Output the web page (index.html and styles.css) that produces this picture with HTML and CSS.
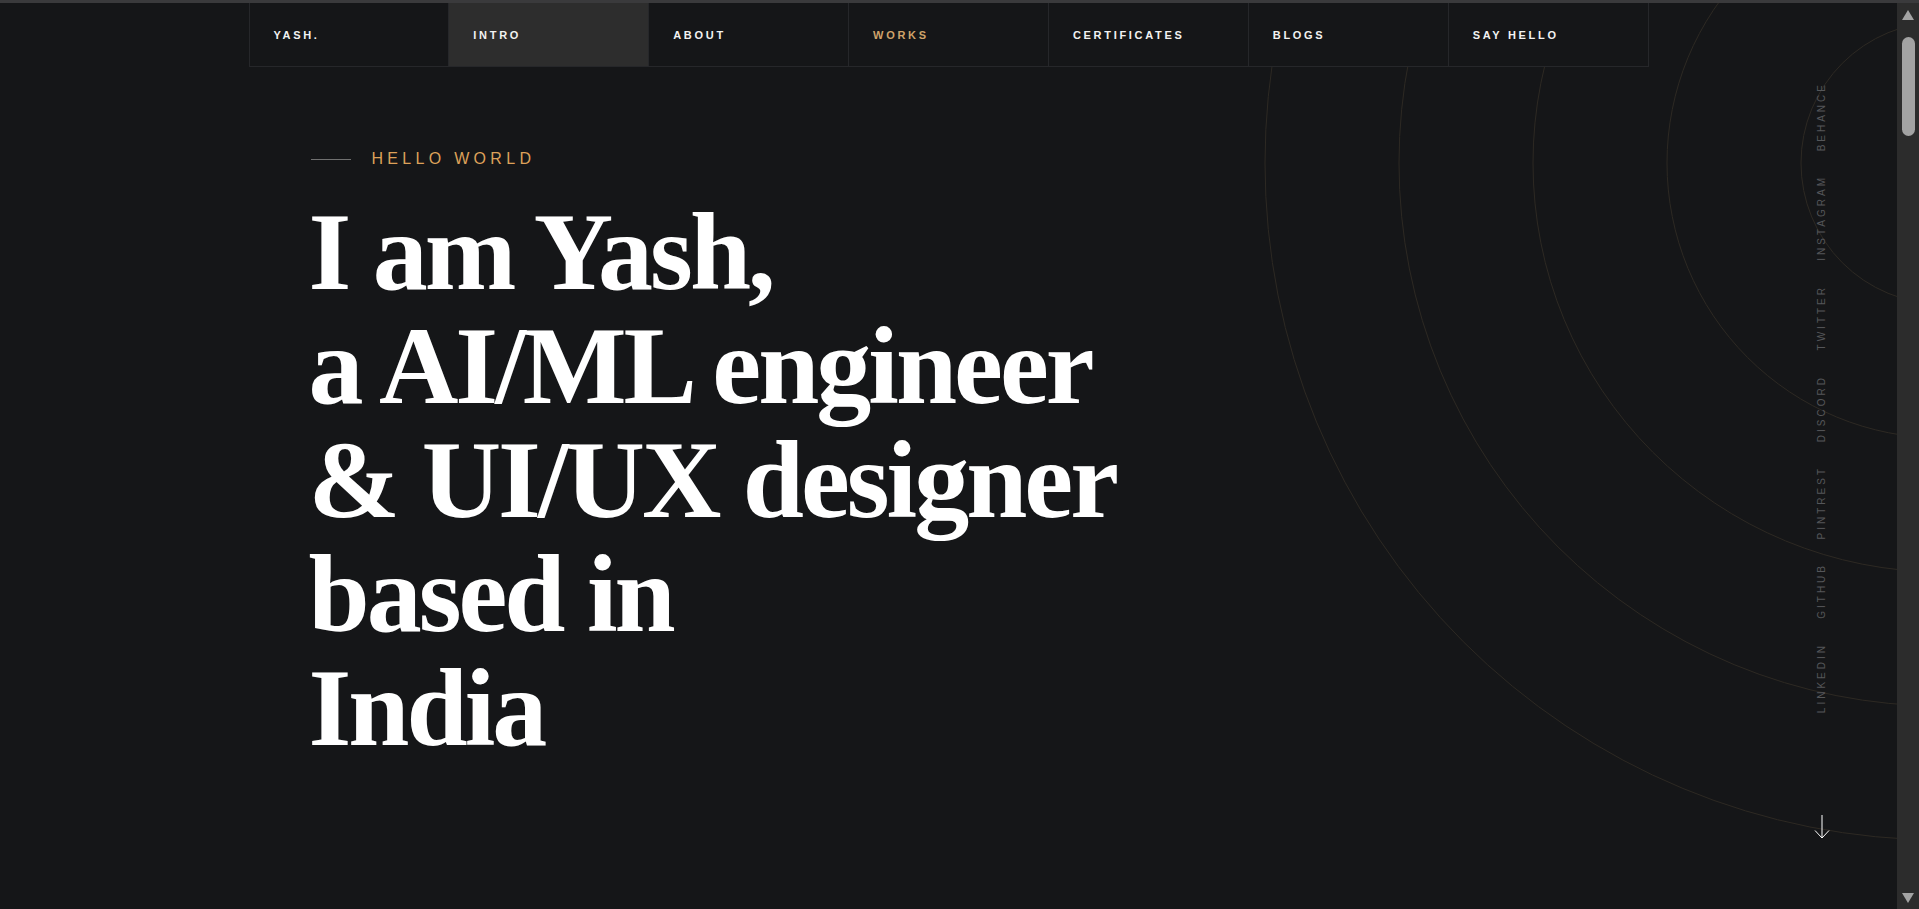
FILE: index.html
```html
<!DOCTYPE html>
<html lang="en">
<head>
<meta charset="utf-8">
<title>Yash — Intro</title>
<link rel="stylesheet" href="styles.css">
</head>
<body>
<div class="window">
  <div class="chrome-bar"></div>
  <div class="frame">
    <main class="page">
      <svg class="rings" viewBox="0 0 1400 906" aria-hidden="true">
        <g fill="none" stroke="#2d2923" stroke-width="1">
          <circle cx="1445" cy="160" r="141"/>
          <circle cx="1445" cy="160" r="275"/>
          <circle cx="1445" cy="160" r="409"/>
          <circle cx="1445" cy="160" r="543"/>
          <circle cx="1445" cy="160" r="677"/>
        </g>
      </svg>

      <nav class="topnav">
        <a class="nav-item" href="#">YASH.</a>
        <a class="nav-item active" href="#">INTRO</a>
        <a class="nav-item" href="#">ABOUT</a>
        <a class="nav-item accent" href="#">WORKS</a>
        <a class="nav-item" href="#">CERTIFICATES</a>
        <a class="nav-item" href="#">BLOGS</a>
        <a class="nav-item" href="#">SAY HELLO</a>
      </nav>

      <section class="hero">
        <div class="eyebrow">
          <span class="eyebrow-line"></span>
          <span class="eyebrow-text">HELLO WORLD</span>
        </div>
        <h1 class="headline">
          <span>I am Yash,</span>
          <span>a AI/ML engineer</span>
          <span>&amp; UI/UX designer</span>
          <span>based in</span>
          <span>India</span>
        </h1>
      </section>

      <ul class="socials">
        <li><a href="#">BEHANCE</a></li>
        <li><a href="#">INSTAGRAM</a></li>
        <li><a href="#">TWITTER</a></li>
        <li><a href="#">DISCORD</a></li>
        <li><a href="#">PINTREST</a></li>
        <li><a href="#">GITHUB</a></li>
        <li><a href="#">LINKEDIN</a></li>
      </ul>

      <a class="scroll-down" href="#" aria-label="Scroll down">
        <svg viewBox="0 0 16 24" width="16" height="24">
          <path d="M8 0V23M1 15.5L8 23L15 15.5" fill="none" stroke="#ffffff" stroke-width="1"/>
        </svg>
      </a>
    </main>

    <div class="scrollbar" aria-hidden="true">
      <span class="sb-up"></span>
      <span class="sb-thumb"></span>
      <span class="sb-down"></span>
    </div>
  </div>
</div>
</body>
</html>
```

FILE: styles.css
```css
* {
  box-sizing: border-box;
}

html,
body {
  margin: 0;
  height: 100%;
  overflow: hidden;
  background: #151618;
}

body {
  font-family: "Liberation Sans", Arial, sans-serif;
}

.window {
  height: 100vh;
  display: flex;
  flex-direction: column;
}

.chrome-bar {
  flex: none;
  height: 3px;
  background: #3a3a3c;
}

.frame {
  flex: 1;
  min-height: 0;
  display: flex;
}

.page {
  flex: 1;
  position: relative;
  overflow: hidden;
  background: #151618;
}

.rings {
  position: absolute;
  top: 0;
  right: 0;
  width: 1400px;
  height: 906px;
  pointer-events: none;
}

/* top navigation */
.topnav {
  position: relative;
  z-index: 1;
  width: 1400px;
  height: 64px;
  margin: 0 auto;
  display: grid;
  grid-template-columns: repeat(7, 1fr);
  background: #151618;
  border-right: 1px solid #26272a;
  border-bottom: 1px solid #26272a;
}

.nav-item {
  display: flex;
  align-items: center;
  padding-left: 24px;
  border-left: 1px solid #26272a;
  color: #f2f2f2;
  font-size: 11px;
  font-weight: 700;
  letter-spacing: 2.7px;
  text-decoration: none;
}

.nav-item.active {
  background: #2d2d2d;
}

.nav-item.accent {
  color: #cfa36a;
}

/* hero */
.hero {
  position: relative;
  z-index: 1;
  width: 1400px;
  margin: 0 auto;
  padding: 82px 0 0 62px;
}

.eyebrow {
  display: flex;
  align-items: center;
  gap: 21px;
  height: 20px;
  margin-bottom: 26px;
}

.eyebrow-line {
  width: 40px;
  height: 1px;
  background: #707070;
}

.eyebrow-text {
  color: #dda15a;
  font-size: 16px;
  line-height: 20px;
  letter-spacing: 4.3px;
}

.headline {
  margin: 0 0 0 -2px;
  font-family: "Liberation Serif", "Times New Roman", serif;
  font-weight: 700;
  font-size: 110px;
  line-height: 114px;
  letter-spacing: -3px;
  color: #ffffff;
}

.headline span {
  display: block;
}

/* vertical social links */
.socials {
  position: absolute;
  z-index: 2;
  top: 79px;
  right: 65px;
  width: 20px;
  margin: 0;
  padding: 0;
  list-style: none;
  display: flex;
  flex-direction: column;
  align-items: center;
  gap: 24px;
}

.socials a {
  display: block;
  writing-mode: vertical-rl;
  transform: rotate(180deg);
  font-size: 10px;
  line-height: 20px;
  letter-spacing: 3px;
  color: #55565a;
  text-decoration: none;
}

.scroll-down {
  position: absolute;
  z-index: 2;
  top: 812px;
  right: 67px;
  width: 16px;
  height: 24px;
  display: block;
}

.scroll-down svg {
  display: block;
}

/* window scrollbar */
.scrollbar {
  flex: none;
  width: 22px;
  background: #2c2c2c;
  display: flex;
  flex-direction: column;
  align-items: center;
  padding: 7px 0 6px;
}

.sb-up {
  width: 0;
  height: 0;
  border-left: 6.5px solid transparent;
  border-right: 6.5px solid transparent;
  border-bottom: 10px solid #a3a3a3;
}

.sb-thumb {
  width: 13px;
  height: 99px;
  margin-top: 17px;
  border-radius: 7px;
  background: #a3a3a3;
}

.sb-down {
  width: 0;
  height: 0;
  margin-top: auto;
  border-left: 6.5px solid transparent;
  border-right: 6.5px solid transparent;
  border-top: 10px solid #a3a3a3;
}
```
